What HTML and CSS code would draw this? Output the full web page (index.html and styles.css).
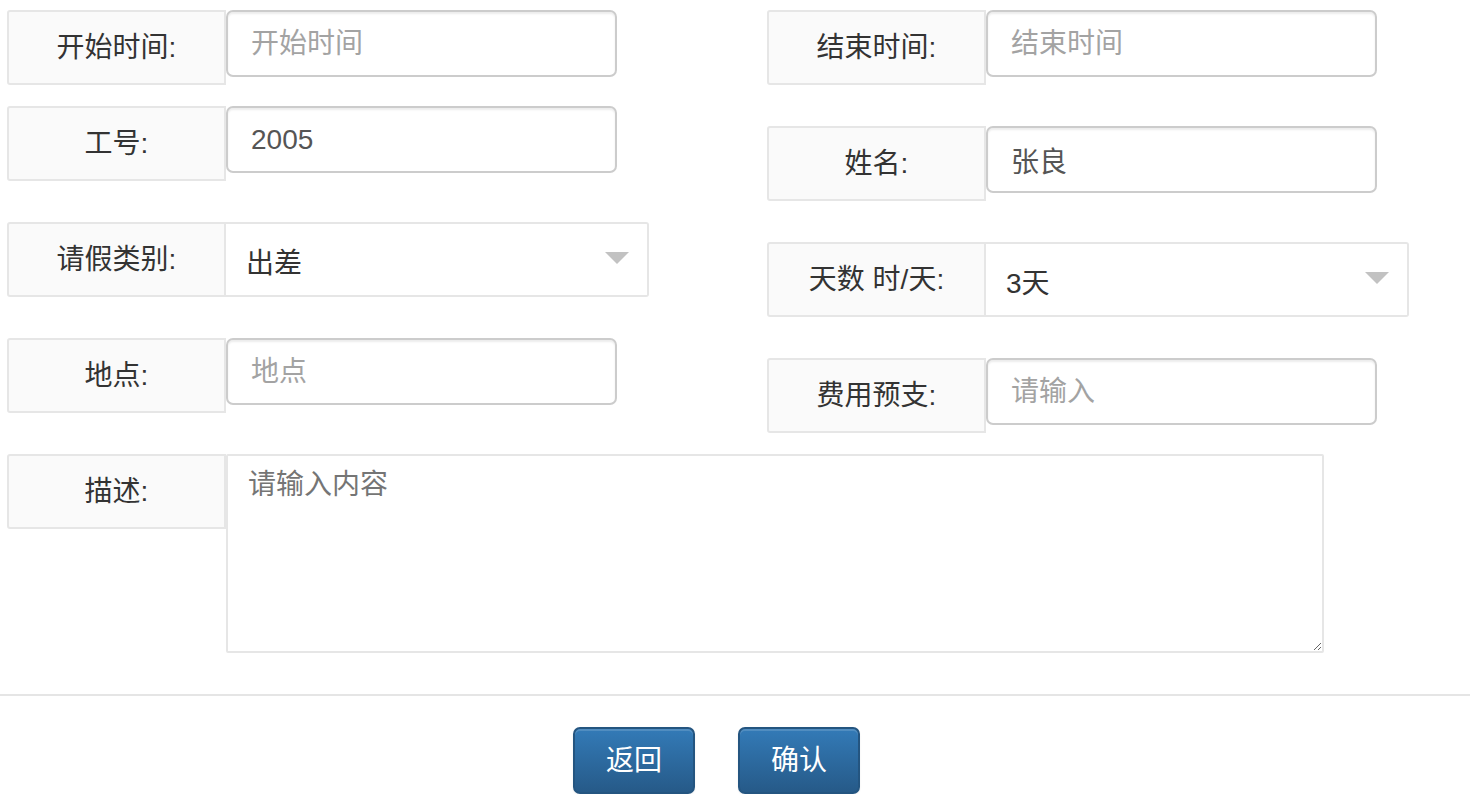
FILE: index.html
```html
<!DOCTYPE html>
<html lang="zh-CN">
<head>
<meta charset="utf-8">
<title>请假申请</title>
<link rel="stylesheet" href="styles.css">
</head>
<body>
<form class="form">
  <div class="columns">
    <div class="col">
      <div class="row row-first">
        <label class="label">开始时间:</label>
        <input class="input" type="text" placeholder="开始时间">
      </div>
      <div class="row">
        <label class="label">工号:</label>
        <input class="input" type="text" value="2005">
      </div>
      <div class="row">
        <label class="label">请假类别:</label>
        <div class="select">
          <span class="select-value">出差</span>
          <svg class="caret" width="24" height="12" viewBox="0 0 24 12"><path d="M0 0 H24 L12 12 Z" fill="#c2c2c2"/></svg>
        </div>
      </div>
      <div class="row row-last">
        <label class="label">地点:</label>
        <input class="input" type="text" placeholder="地点">
      </div>
    </div>
    <div class="col">
      <div class="row">
        <label class="label">结束时间:</label>
        <input class="input" type="text" placeholder="结束时间">
      </div>
      <div class="row">
        <label class="label">姓名:</label>
        <input class="input" type="text" value="张良">
      </div>
      <div class="row">
        <label class="label">天数 时/天:</label>
        <div class="select">
          <span class="select-value">3天</span>
          <svg class="caret" width="24" height="12" viewBox="0 0 24 12"><path d="M0 0 H24 L12 12 Z" fill="#c2c2c2"/></svg>
        </div>
      </div>
      <div class="row row-last">
        <label class="label">费用预支:</label>
        <input class="input" type="text" placeholder="请输入">
      </div>
    </div>
  </div>
  <div class="row row-area">
    <label class="label">描述:</label>
    <textarea class="textarea" placeholder="请输入内容"></textarea>
  </div>
  <hr class="sep">
  <div class="actions">
    <button type="button" class="btn">返回</button>
    <button type="button" class="btn">确认</button>
  </div>
</form>
</body>
</html>
```

FILE: styles.css
```css
* { box-sizing: border-box; }

html, body {
  margin: 0;
  padding: 0;
  background: #fff;
}

body {
  font-family: "Liberation Sans", "Noto Sans CJK SC", Arial, sans-serif;
  font-size: 28px;
  color: #333;
}

.form {
  padding-top: 10px;
}

.columns {
  display: flex;
  align-items: flex-start;
  padding-left: 7px;
}

.col {
  width: 760px;
  flex: none;
  display: flex;
  flex-direction: column;
}

.col + .col {
  width: 680px;
}

.row {
  display: flex;
  align-items: flex-start;
  margin-bottom: 41px;
}

.row-first {
  margin-bottom: 21px;
}

.row-last {
  margin-bottom: 0;
}

.label {
  width: 219px;
  height: 75px;
  flex: none;
  display: flex;
  align-items: center;
  justify-content: center;
  background: #fafafa;
  border: 2px solid #e6e6e6;
  border-radius: 3px 0 0 3px;
  color: #333;
  font-size: 28px;
  line-height: 1;
  white-space: nowrap;
}

.input {
  width: 391px;
  height: 67px;
  flex: none;
  margin: 0;
  padding: 0 23px;
  border: 2px solid #ccc;
  border-radius: 7px;
  background: #fff;
  box-shadow: inset 0 2px 2px rgba(0, 0, 0, 0.075);
  font-family: inherit;
  font-size: 28px;
  color: #555;
  outline: none;
}

.input::placeholder {
  color: #a3a3a3;
}

.select {
  width: 423px;
  height: 75px;
  flex: none;
  display: flex;
  align-items: center;
  justify-content: space-between;
  padding: 2px 18px 0 20px;
  border: 2px solid #e6e6e6;
  border-left: none;
  border-radius: 0 3px 3px 0;
  background: #fff;
  color: #333;
}

.caret {
  display: block;
  margin-top: -6px;
}

.row-area {
  margin: 21px 0 0 7px;
}

.textarea {
  width: 1098px;
  height: 199px;
  flex: none;
  margin: 0;
  padding: 14px 20px 10px;
  border: 2px solid #e6e6e6;
  border-radius: 2px;
  background: #fff;
  font-family: inherit;
  font-size: 28px;
  line-height: 1.1;
  color: #333;
  outline: none;
  resize: both;
}

.textarea::placeholder {
  color: #757575;
}

.sep {
  margin: 41px 0 0 0;
  height: 2px;
  border: none;
  background: #e5e5e5;
}

.actions {
  display: flex;
  justify-content: center;
  gap: 43px;
  padding-right: 37px;
  margin-top: 31px;
}

.btn {
  width: 122px;
  height: 67px;
  padding: 0;
  border: 2px solid #245580;
  border-radius: 7px;
  background: linear-gradient(#337ab7, #265a88);
  box-shadow: inset 0 2px 0 rgba(255, 255, 255, 0.15), 0 1px 2px rgba(0, 0, 0, 0.075);
  color: #fff;
  font-family: inherit;
  font-size: 28px;
  line-height: 1;
  cursor: pointer;
}
```
